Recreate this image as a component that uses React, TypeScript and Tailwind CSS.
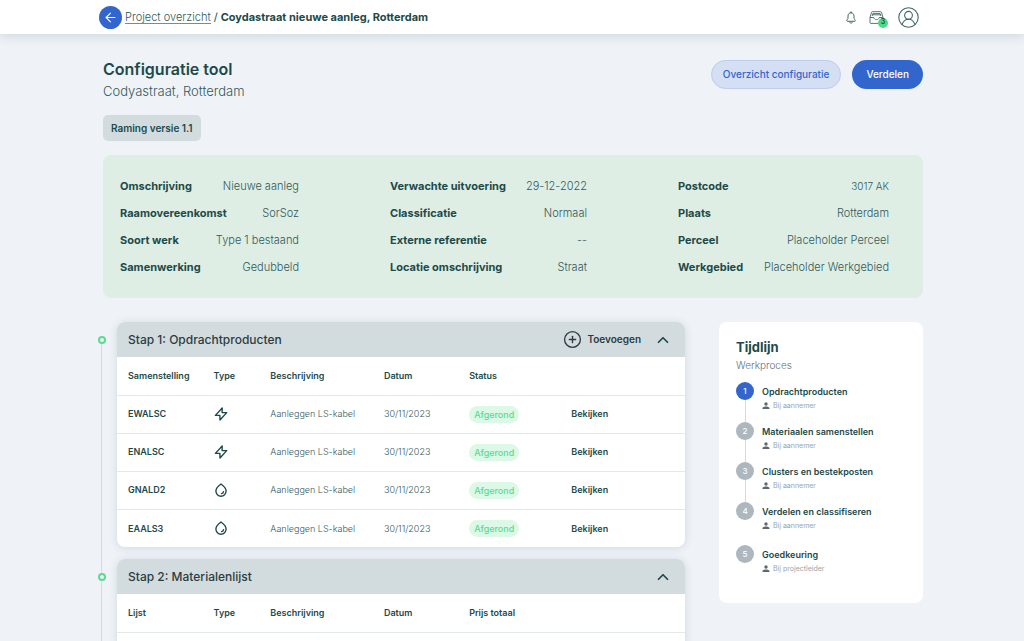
import { FC, ReactNode } from "react";
import { ArrowLeft, ChevronUp, CirclePlus } from "lucide-react";

type Field = { label: string; value: string; small?: boolean };

const details: { width: string; fields: Field[] }[] = [
    {
        width: "w-[179px]",
        fields: [
            { label: "Omschrijving", value: "Nieuwe aanleg" },
            { label: "Raamovereenkomst", value: "SorSoz" },
            { label: "Soort werk", value: "Type 1 bestaand" },
            { label: "Samenwerking", value: "Gedubbeld" },
        ],
    },
    {
        width: "w-[197px]",
        fields: [
            { label: "Verwachte uitvoering", value: "29-12-2022" },
            { label: "Classificatie", value: "Normaal" },
            { label: "Externe referentie", value: "--" },
            { label: "Locatie omschrijving", value: "Straat" },
        ],
    },
    {
        width: "w-[211px]",
        fields: [
            { label: "Postcode", value: "3017 AK", small: true },
            { label: "Plaats", value: "Rotterdam" },
            { label: "Perceel", value: "Placeholder Perceel" },
            { label: "Werkgebied", value: "Placeholder Werkgebied" },
        ],
    },
];

const products = [
    { code: "EWALSC", type: "power" },
    { code: "ENALSC", type: "power" },
    { code: "GNALD2", type: "water" },
    { code: "EAALS3", type: "water" },
];

const timeline = [
    { title: "Opdrachtproducten", owner: "Bij aannemer" },
    { title: "Materiaalen samenstellen", owner: "Bij aannemer" },
    { title: "Clusters en bestekposten", owner: "Bij aannemer" },
    { title: "Verdelen en classifiseren", owner: "Bij aannemer" },
    { title: "Goedkeuring", owner: "Bij projectleider" },
];

const BoltIcon: FC = () => (
    <svg className="size-[14px]" viewBox="0 0 14 14" fill="none" stroke="currentColor" strokeWidth="1.4" strokeLinejoin="round" role="img" aria-label="Elektra">
        <path d="M8.2 1 1.4 8.4h4.5L6 13l6.7-7.4H8.1Z" />
    </svg>
);

const DropIcon: FC = () => (
    <svg className="size-[14px]" viewBox="0 0 14 14" fill="none" stroke="currentColor" strokeWidth="1.4" strokeLinecap="round" strokeLinejoin="round" role="img" aria-label="Water">
        <path d="M7 1C5.2 2.3 1.9 5.1 1.9 8.1a5.1 5.1 0 0 0 10.2 0C12.1 5.1 8.8 2.3 7 1Z" />
        <path d="M9.5 8.6a2.3 2.3 0 0 1-1.9 2" />
    </svg>
);

const PersonIcon: FC = () => (
    <svg className="size-2" viewBox="0 0 8 8" fill="currentColor" aria-hidden="true">
        <circle cx="4" cy="2" r="1.7" />
        <path d="M.5 7V6.2C.5 5.1 2.5 4.5 4 4.5s3.5.6 3.5 1.7V7Z" />
    </svg>
);

const BellIcon: FC = () => (
    <svg className="h-[13px] w-[10px]" viewBox="0 0 10 13" fill="none" stroke="currentColor" strokeWidth="1" strokeLinecap="round" strokeLinejoin="round" aria-hidden="true">
        <path d="M5 .8v.8M5 1.7c-1.9 0-3 1.5-3 3.3v2.3c0 .9-1.3 1.5-1.3 2.4 0 .4.3.6.7.6h7.2c.4 0 .7-.2.7-.6 0-.9-1.3-1.500-1.300-2.400V5c0-1.800-1.100-3.300-3-3.300ZM3.700 11.300c.3.600.7.900 1.300.9s1-.3 1.300-.9" />
    </svg>
);

const InboxIcon: FC = () => (
    <svg className="h-[13px] w-[15px]" viewBox="0 0 15 13" fill="none" stroke="currentColor" strokeWidth="0.9" strokeLinejoin="round" aria-hidden="true">
        <path d="M1 6.5 2.5 1.4c.1-.4.4-.7.8-.7h8.4c.4 0 .7.3.8.7L14 6.5v5.2c0 .4-.3.7-.7.7H1.7c-.4 0-.7-.3-.7-.7Z" />
        <path d="M1 6.5h3.800c.3 1.200 1.300 2.100 2.700 2.100s2.400-.9 2.700-2.100H14M3.200 5l.6-2.400h7.400l.6 2.400M3.600 3.800h7.800" />
    </svg>
);

const AvatarIcon: FC = () => (
    <svg className="size-[21px]" viewBox="0 0 21 21" fill="none" stroke="currentColor" strokeWidth="1.1" aria-hidden="true">
        <circle cx="10.5" cy="10.5" r="9.7" />
        <circle cx="10.5" cy="8.3" r="3.9" />
        <path d="M4.1 17.6c1-3.2 3.4-5.4 6.4-5.4s5.4 2.200 6.400 5.400" />
    </svg>
);

const Header: FC = () => (
    <header className="relative z-10 shrink-0 bg-white shadow-[0_2px_12px_rgba(30,50,80,0.16)]">
        <div className="mx-auto flex h-[34px] max-w-[826px] items-center justify-between pr-[6px]">
            <nav className="flex items-center text-[11px]">
                <button className="mr-[3px] flex size-[23px] items-center justify-center rounded-full bg-[#3266cc] text-white" aria-label="Terug">
                    <ArrowLeft size={15} strokeWidth={1.7} />
                </button>
                <a href="#" className="mr-[3px] border-b border-[#73908f] leading-3 font-light text-[#33595a]">Project overzicht</a>
                <span className="mr-[3px]">/</span>
                <span className="font-bold">Coydastraat nieuwe aanleg, Rotterdam</span>
            </nav>
            <div className="flex items-center text-[#416866]">
                <button className="mr-[13px]" aria-label="Meldingen">
                    <BellIcon />
                </button>
                <button className="relative mr-[14px]" aria-label="Berichten">
                    <InboxIcon />
                    <span className="absolute -right-1 -bottom-1 flex size-[10px] items-center justify-center rounded-full bg-[#4fd983] text-[7px] font-semibold text-[#1d4a49]">3</span>
                </button>
                <button aria-label="Profiel">
                    <AvatarIcon />
                </button>
            </div>
        </div>
    </header>
);

const Details: FC = () => (
    <section className="mt-[14px] flex justify-between rounded-lg bg-[#deeee5] pt-[18px] pr-[34px] pb-[17px] pl-[17px]">
        {details.map(({ width, fields }) => (
            <dl key={width} className={width}>
                {fields.map((f) => (
                    <div key={f.label} className="flex h-[27px] items-center justify-between whitespace-nowrap">
                        <dt className="text-[11px] font-bold">{f.label}</dt>
                        <dd className={f.small ? "text-[10px] font-light text-[#33595a]" : "text-[11px] font-light text-[#33595a]"}>{f.value}</dd>
                    </div>
                ))}
            </dl>
        ))}
    </section>
);

type StepProps = { title: string; columns: string[]; action?: ReactNode; children: ReactNode };

const Step: FC<StepProps> = ({ title, columns, action, children }) => (
    <section className="flex">
        <div className="flex w-[19px] shrink-0 flex-col">
            <span className="mt-[14px] size-2 shrink-0 rounded-full border-2 border-[#5cdb8d]" />
            <span className="ml-[3px] w-px grow bg-[#d5dce1]" />
            <span className="-mb-[14px] ml-[3px] h-[14px] w-px bg-[#d5dce1]" />
        </div>
        <div className="mb-3 grow overflow-hidden rounded-lg bg-white shadow-[0_1px_8px_rgba(30,50,80,0.14)]">
            <div className="flex h-[35px] items-center bg-[#d2dcdf] pr-[13px] pl-[11px]">
                <h2 className="grow text-[12px] font-medium text-[#2b3b40]">{title}</h2>
                {action}
                <button className="text-[#1d4a49]" aria-label="Inklappen">
                    <ChevronUp size={18} strokeWidth={2.3} />
                </button>
            </div>
            <table className="w-full table-fixed text-left text-[9px]">
                <thead>
                    <tr className="h-[38px]">
                        <th className="w-[17%] pl-[11px] font-semibold">{columns[0]}</th>
                        <th className="w-[10%] font-semibold">{columns[1]}</th>
                        <th className="w-[20%] font-semibold">{columns[2]}</th>
                        <th className="w-[15%] font-semibold">{columns[3]}</th>
                        <th className="w-[18%] font-semibold">{columns[4]}</th>
                        <td />
                    </tr>
                </thead>
                <tbody>{children}</tbody>
            </table>
        </div>
    </section>
);

const Timeline: FC = () => (
    <aside className="h-[281px] w-[204px] shrink-0 rounded-lg bg-white px-[17px] pt-4">
        <h2 className="text-[13px] leading-[18px] font-bold">Tijdlijn</h2>
        <p className="text-[10px] leading-[18px] font-light text-[#66737a]">Werkproces</p>
        <ol className="mt-2">
            {timeline.map((item, i) => (
                <li key={item.title} className={i === 3 ? "flex h-[43px]" : "flex h-10"}>
                    <div className="mr-2 flex flex-col items-center">
                        <span className={`flex size-[18px] shrink-0 items-center justify-center rounded-full text-[8px] font-medium text-white ${i === 0 ? "bg-[#3266cc]" : "bg-[#adb7c0]"}`}>
                            {i + 1}
                        </span>
                        {i < 3 && <span className="w-px grow bg-[#d5dce1]" />}
                    </div>
                    <div className="pt-1">
                        <h3 className="text-[9px] leading-3 font-semibold">{item.title}</h3>
                        <p className="mt-[2px] flex items-center gap-[3px] text-[7px] leading-3 text-[#9aa3a9]">
                            <span className="text-[#5d686e]"><PersonIcon /></span>
                            {item.owner}
                        </p>
                    </div>
                </li>
            ))}
        </ol>
    </aside>
);

const App: FC = () => {
    return (
        <div className="flex h-screen flex-col bg-[#eff3f8] font-['Inter',sans-serif] text-[#1d4a49]">
            <Header />
            <main className="grow overflow-y-auto [scrollbar-width:none]">
                <div className="mx-auto max-w-[838px] px-[10px] pr-2 pt-6">
                    <div className="flex items-start justify-between">
                        <div>
                            <h1 className="text-[16px] leading-[22px] font-semibold">Configuratie tool</h1>
                            <p className="text-[13px] leading-[22px] font-light text-[#33595a]">Codyastraat, Rotterdam</p>
                        </div>
                        <div className="mt-[2px] flex gap-[11px] text-[10px] font-medium">
                            <button className="h-[29px] rounded-full border border-[#bccdf0] bg-[#d5dff3] px-[11px] text-[#3266cc]">Overzicht configuratie</button>
                            <button className="h-[29px] rounded-full bg-[#3266cc] px-[14px] text-white">Verdelen</button>
                        </div>
                    </div>
                    <div className="mt-[13px] flex">
                        <span className="rounded-[5px] bg-[#d2dcdf] px-2 text-[10px] leading-[26px] font-semibold">Raming versie 1.1</span>
                    </div>
                    <Details />
                    <div className="mt-6 flex items-start gap-[34px]">
                        <div className="-ml-[5px] grow">
                            <Step
                                title="Stap 1: Opdrachtproducten"
                                columns={["Samenstelling", "Type", "Beschrijving", "Datum", "Status"]}
                                action={
                                    <button className="mr-[13px] flex items-center gap-[5px] text-[10px] font-semibold text-[#2b3b40]">
                                        <CirclePlus size={19} strokeWidth={1.7} />
                                        Toevoegen
                                    </button>
                                }
                            >
                                {products.map((p) => (
                                    <tr key={p.code} className="h-[38px] border-t border-[#e3e8ea]">
                                        <td className="pl-[11px] font-semibold">{p.code}</td>
                                        <td>{p.type === "power" ? <BoltIcon /> : <DropIcon />}</td>
                                        <td className="font-light text-[#33595a]">Aanleggen LS-kabel</td>
                                        <td className="font-light text-[#33595a]">30/11/2023</td>
                                        <td>
                                            <span className="inline-block rounded-full bg-[#dcf8e6] px-[5px] leading-[17px] font-medium text-[#5cdb8d]">Afgerond</span>
                                        </td>
                                        <td>
                                            <button className="font-semibold">Bekijken</button>
                                        </td>
                                    </tr>
                                ))}
                            </Step>
                            <Step title="Stap 2: Materialenlijst" columns={["Lijst", "Type", "Beschrijving", "Datum", "Prijs totaal"]}>
                                <tr className="h-[38px] border-t border-[#e3e8ea]">
                                    <td colSpan={6} />
                                </tr>
                            </Step>
                        </div>
                        <Timeline />
                    </div>
                </div>
            </main>
        </div>
    );
};

export default App;
